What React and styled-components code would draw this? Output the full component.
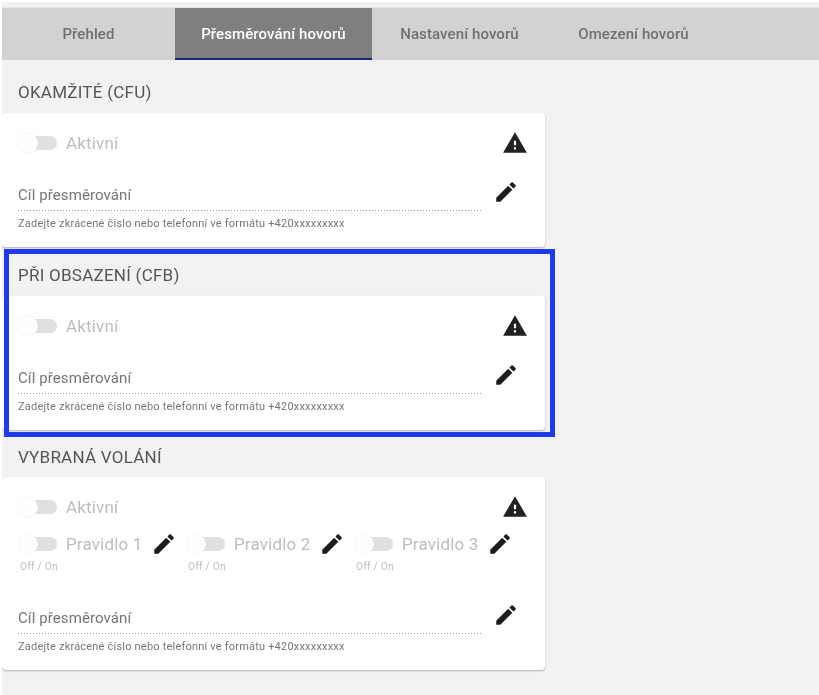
import styled, { createGlobalStyle } from "styled-components";
import { MdEdit, MdWarning } from "react-icons/md";

const GlobalStyle = createGlobalStyle`
  html, body {
    margin: 0;
    padding: 0;
    background: #ffffff;
  }
  body {
    font-family: Roboto, "Liberation Sans", sans-serif;
  }
`;

const Page = styled.div`
  margin: 2px 0 0 2px;
  height: 693px;
  padding-top: 5px;
  box-sizing: border-box;
  background: #f2f2f2;
  overflow: hidden;
  filter: blur(0.4px);
`;

const TabBar = styled.nav`
  display: grid;
  grid-template-columns: 173px 197px 175px 173px;
  height: 53px;
  background: #d2d2d2;
  border-top: 1px solid #e6e6e6;
  box-sizing: border-box;
`;

const Tab = styled.div`
  display: flex;
  align-items: center;
  justify-content: center;
  padding-top: 2px;
  font-size: 15px;
  font-weight: 500;
  letter-spacing: 0.1px;
  color: ${(props) => (props.$active ? "#ffffff" : "#707070")};
  background: ${(props) => (props.$active ? "#7f7f7f" : "transparent")};
  border-bottom: 2px solid ${(props) => (props.$active ? "#1a237e" : "transparent")};
`;

const Sections = styled.main`
  display: flex;
  flex-direction: column;
  gap: 18px;
  width: 543px;
  padding-top: 23px;
`;

const Section = styled.section`
  position: relative;
  ${(props) =>
    props.$highlighted &&
    `
    margin-top: 1px;
    &::after {
      content: "";
      position: absolute;
      top: -17px;
      left: 2px;
      right: -10px;
      bottom: -7px;
      border: 5px solid #1f3bf0;
      pointer-events: none;
    }`}
`;

const SectionTitle = styled.h2`
  margin: 0 0 ${(props) => (props.$tight ? 11 : 12)}px 16px;
  font-size: 17px;
  line-height: 18px;
  font-weight: 400;
  letter-spacing: 0.25px;
  color: #555555;
`;

const Card = styled.div`
  padding: 18px 17px 16px 16px;
  background: #ffffff;
  border-radius: 4px;
  box-shadow: 0 1px 2px rgba(0, 0, 0, 0.28);
`;

const TopRow = styled.div`
  display: flex;
  align-items: center;
  justify-content: space-between;
  height: 24px;
`;

const SwitchLabel = styled.div`
  display: flex;
  align-items: center;
  height: 24px;
  gap: 9px;
  font-size: 17px;
  letter-spacing: 0.15px;
  color: #bdbdbd;
`;

const Track = styled.span`
  position: relative;
  display: block;
  flex: none;
  width: 37px;
  height: 14px;
  margin-left: 2px;
  border-radius: 7px;
  background: #e0e0e0;
`;

const Thumb = styled.span`
  position: absolute;
  top: -3px;
  left: -2px;
  width: 20px;
  height: 20px;
  border-radius: 50%;
  background: #fefefe;
  box-shadow: 0 0 2px rgba(0, 0, 0, 0.1);
`;

const RuleRow = styled.div`
  display: grid;
  grid-template-columns: repeat(3, 168px);
  margin-top: 13px;
`;

const Rule = styled.div`
  display: flex;
  flex-direction: column;
`;

const RuleHead = styled.div`
  display: flex;
  align-items: center;
  justify-content: space-between;
  width: 159px;
  height: 24px;
`;

const RuleCaption = styled.span`
  margin: 5px 0 0 2px;
  font-size: 10px;
  line-height: 12px;
  letter-spacing: 0.3px;
  color: #bdbdbd;
`;

const FieldRow = styled.div`
  display: flex;
  align-items: flex-start;
  gap: 12px;
  margin-top: ${(props) => props.$top}px;
`;

const Field = styled.div`
  flex: none;
  width: 463px;
  padding-top: 6px;
`;

const FieldLabel = styled.div`
  padding-bottom: 6px;
  background: repeating-linear-gradient(90deg, #999999 0 1px, transparent 1px 3px) bottom / 100% 1px no-repeat;
  font-size: 15px;
  line-height: 20px;
  letter-spacing: 0.1px;
  color: #757575;
`;

const HelperText = styled.div`
  margin-top: 6px;
  font-size: 11px;
  line-height: 14px;
  letter-spacing: 0.2px;
  color: #757575;
`;

const WarningIcon = styled(MdWarning)`
  display: block;
  color: #212121;
`;

const EditIcon = styled(MdEdit)`
  display: block;
  flex: none;
  color: #1c1c1c;
`;

function Switch() {
  return (
    <Track>
      <Thumb />
    </Track>
  );
}

function ForwardCard({ rules }) {
  return (
    <Card>
      <TopRow>
        <SwitchLabel>
          <Switch />
          Aktivní
        </SwitchLabel>
        <WarningIcon size={26} />
      </TopRow>
      {rules && (
        <RuleRow>
          {rules.map((rule) => (
            <Rule key={rule}>
              <RuleHead>
                <SwitchLabel>
                  <Switch />
                  {rule}
                </SwitchLabel>
                <EditIcon size={26} />
              </RuleHead>
              <RuleCaption>Off / On</RuleCaption>
            </Rule>
          ))}
        </RuleRow>
      )}
      <FieldRow $top={rules ? 29 : 24}>
        <Field>
          <FieldLabel>Cíl přesměrování</FieldLabel>
          <HelperText>Zadejte zkrácené číslo nebo telefonní ve formátu +420xxxxxxxxx</HelperText>
        </Field>
        <EditIcon size={26} />
      </FieldRow>
    </Card>
  );
}

export default function App() {
  return (
    <>
      <GlobalStyle />
      <Page>
        <TabBar>
          <Tab>Přehled</Tab>
          <Tab $active>Přesměrování hovorů</Tab>
          <Tab>Nastavení hovorů</Tab>
          <Tab>Omezení hovorů</Tab>
        </TabBar>
        <Sections>
          <Section>
            <SectionTitle>OKAMŽITÉ (CFU)</SectionTitle>
            <ForwardCard />
          </Section>
          <Section $highlighted>
            <SectionTitle>PŘI OBSAZENÍ (CFB)</SectionTitle>
            <ForwardCard />
          </Section>
          <Section>
            <SectionTitle $tight>VYBRANÁ VOLÁNÍ</SectionTitle>
            <ForwardCard rules={["Pravidlo 1", "Pravidlo 2", "Pravidlo 3"]} />
          </Section>
        </Sections>
      </Page>
    </>
  );
}
